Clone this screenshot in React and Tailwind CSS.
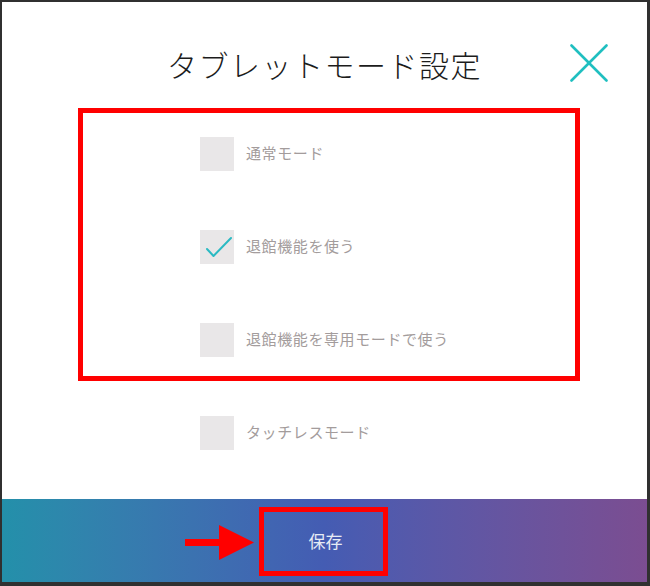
import React from 'react';

const options = [
  { label: '通常モード', checked: false },
  { label: '退館機能を使う', checked: true },
  { label: '退館機能を専用モードで使う', checked: false },
  { label: 'タッチレスモード', checked: false },
];

function Option({ label, checked }) {
  return (
    <div className="flex items-center h-[34px]">
      <div className="w-[34px] h-[34px] bg-[#e9e7e8] shrink-0">
        {checked && (
          <svg width="34" height="34" viewBox="0 0 34 34">
            <polyline points="7,19 13.5,26 31,8" fill="none" stroke="#2bbac3" strokeWidth="2" strokeLinecap="round" strokeLinejoin="round" />
          </svg>
        )}
      </div>
      <span className="ml-[12px] -mt-[1px] text-[15px] text-[#a39c9c] tracking-[0.6px]">{label}</span>
    </div>
  );
}

export default function App() {
  return (
    <div
      className="relative w-[650px] h-[586px] bg-[#303030] pl-[2px] pt-[2px] pr-[3px] pb-[4px]"
      style={{ fontFamily: '"Noto Sans CJK JP", "Noto Sans", sans-serif' }}
    >
      <div className="w-full h-full bg-white flex flex-col">
        {/* ヘッダー */}
        <div className="grid grid-cols-[1fr_auto_1fr] items-center pt-[40px] h-[85px]">
          <div />
          <h1 className="text-[30px] font-light text-[#1c1c1c] leading-[45px] tracking-[1.5px] -mt-[1px]">タブレットモード設定</h1>
          <button className="justify-self-end mr-[39px] w-[38px] h-[38px] -mt-[4px]">
            <svg width="38" height="38" viewBox="0 0 38 38">
              <line x1="1.5" y1="1.5" x2="36.5" y2="36.5" stroke="#20bfc0" strokeWidth="2.6" strokeLinecap="round" />
              <line x1="36.5" y1="1.5" x2="1.5" y2="36.5" stroke="#20bfc0" strokeWidth="2.6" strokeLinecap="round" />
            </svg>
          </button>
        </div>

        {/* オプション */}
        <div className="flex flex-col gap-[59px] mt-[50px] pl-[198px]">
          {options.map((o) => (
            <Option key={o.label} label={o.label} checked={o.checked} />
          ))}
        </div>

        <div className="flex-1" />

        {/* フッター */}
        <div className="h-[83px] bg-gradient-to-r from-[#2390aa] via-[#445cb3] to-[#7b4d91] flex items-center justify-center">
          <button className="text-[17px] text-[#e6ebf5] pl-[2px]">保存</button>
        </div>
      </div>

      {/* 注釈 */}
      <div className="absolute left-[78px] top-[108px] w-[502px] h-[273px] border-[5px] border-[#ff0000]" />
      <div className="absolute left-[259px] top-[507px] w-[129px] h-[69px] border-[5px] border-[#ff0000]" />
      <svg className="absolute left-[185px] top-[525px]" width="70" height="36" viewBox="0 0 70 36">
        <rect x="0" y="14" width="36" height="7" fill="#ff0000" />
        <polygon points="34,0 69,17.5 34,35" fill="#ff0000" />
      </svg>
    </div>
  );
}
